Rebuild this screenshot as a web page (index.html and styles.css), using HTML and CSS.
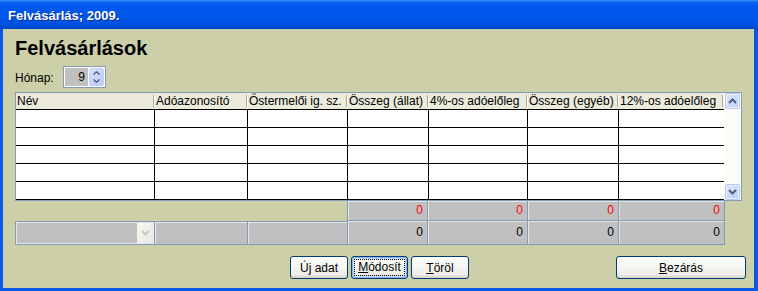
FILE: index.html
```html
<!DOCTYPE html>
<html lang="hu">
<head>
<meta charset="utf-8">
<title>Felvásárlás; 2009.</title>
<link rel="stylesheet" href="styles.css">
</head>
<body>
<div class="window">
  <div class="titlebar"><span class="title">Felvásárlás; 2009.</span></div>
  <div class="frame">
    <h1 class="heading">Felvásárlások</h1>
    <div class="month">
      <span class="month-label">Hónap:</span>
      <div class="spin">
        <div class="spin-field">9</div>
        <div class="spin-btns">
          <div class="spin-btn"><svg width="7" height="4" viewBox="0 0 7 4"><polyline points="0.5,3.5 3.5,0.8 6.5,3.5" fill="none" stroke="#4d6185" stroke-width="1.4"/></svg></div>
          <div class="spin-btn"><svg width="7" height="4" viewBox="0 0 7 4"><polyline points="0.5,0.5 3.5,3.2 6.5,0.5" fill="none" stroke="#4d6185" stroke-width="1.4"/></svg></div>
        </div>
      </div>
    </div>

    <div class="grid">
      <div class="data">
        <div class="hdr cols">
          <div class="hc">Név</div>
          <div class="hc">Adóazonosító</div>
          <div class="hc">Őstermelői ig. sz.</div>
          <div class="hc">Összeg (állat)</div>
          <div class="hc">4%-os adóelőleg</div>
          <div class="hc">Összeg (egyéb)</div>
          <div class="hc">12%-os adóelőleg</div>
        </div>
        <div class="row cols"><div class="dc"></div><div class="dc"></div><div class="dc"></div><div class="dc"></div><div class="dc"></div><div class="dc"></div><div class="dc"></div></div>
        <div class="row cols"><div class="dc"></div><div class="dc"></div><div class="dc"></div><div class="dc"></div><div class="dc"></div><div class="dc"></div><div class="dc"></div></div>
        <div class="row cols"><div class="dc"></div><div class="dc"></div><div class="dc"></div><div class="dc"></div><div class="dc"></div><div class="dc"></div><div class="dc"></div></div>
        <div class="row cols"><div class="dc"></div><div class="dc"></div><div class="dc"></div><div class="dc"></div><div class="dc"></div><div class="dc"></div><div class="dc"></div></div>
        <div class="row cols"><div class="dc"></div><div class="dc"></div><div class="dc"></div><div class="dc"></div><div class="dc"></div><div class="dc"></div><div class="dc"></div></div>
      </div>
      <div class="vscroll">
        <div class="sbtn"><svg width="9" height="6" viewBox="0 0 9 6"><polyline points="1,5 4.5,1.5 8,5" fill="none" stroke="#4d6185" stroke-width="2"/></svg></div>
        <div class="track"></div>
        <div class="sbtn"><svg width="9" height="6" viewBox="0 0 9 6"><polyline points="1,1 4.5,4.5 8,1" fill="none" stroke="#4d6185" stroke-width="2"/></svg></div>
      </div>
    </div>

    <div class="sums">
      <div class="sum-row r1">
        <div class="sc first">0</div>
        <div class="sc">0</div>
        <div class="sc">0</div>
        <div class="sc">0</div>
      </div>
      <div class="sum-row r2">
        <div class="combo">
          <div class="combo-btn"><svg width="9" height="6" viewBox="0 0 9 6"><polyline points="1,1 4.5,4.5 8,1" fill="none" stroke="#c6c5bc" stroke-width="2"/></svg></div>
        </div>
        <div class="sc bt"></div>
        <div class="sc bt"></div>
        <div class="sc">0</div>
        <div class="sc">0</div>
        <div class="sc">0</div>
        <div class="sc">0</div>
      </div>
    </div>

    <div class="buttons">
      <div class="btn-group">
        <button class="btn w58"><span class="lbl">Ú<u>j</u> adat</span></button>
        <button class="btn w57 focused"><span class="focus-ring"><u>M</u>ódosít</span></button>
        <button class="btn w58"><span class="lbl"><u>T</u>öröl</span></button>
      </div>
      <button class="btn close"><span class="lbl"><u>B</u>ezárás</span></button>
    </div>
  </div>
</div>
</body>
</html>
```

FILE: styles.css
```css
* { box-sizing: border-box; }
html, body { margin: 0; padding: 0; }
body {
  width: 758px;
  height: 291px;
  overflow: hidden;
  font-family: "Liberation Sans", Arial, sans-serif;
  font-size: 12px;
  color: #000;
  background: #cccfa8;
}
.window {
  width: 758px;
  height: 291px;
  display: flex;
  flex-direction: column;
}
.titlebar {
  height: 29px;
  flex: none;
  padding: 3px 0 0 8px;
  background: linear-gradient(to bottom, #3d8ff7 0px, #0c66ee 2px, #0058ee 5px, #0056ea 20px, #0050de 25px, #0044c6 29px);
}
.title {
  display: block;
  line-height: 26px;
  font-size: 13px;
  font-weight: bold;
  color: #fff;
  text-shadow: 1px 1px 0 #0a2a8a;
}
.frame {
  flex: 1;
  background: #cccfa8;
  border-style: solid;
  border-color: #0a57e4;
  border-width: 0 4px 3px 3px;
  padding: 0 8px 0 12px;
}
.heading {
  margin: 7px 0 0;
  font-size: 20px;
  line-height: 24px;
  font-weight: bold;
}
.month {
  display: flex;
  align-items: center;
  height: 22px;
  margin-top: 6px;
}
.month-label {
  width: 48px;
  padding-top: 2px;
}
.spin {
  display: flex;
  width: 43px;
  height: 22px;
  border: 1px solid #7f9db9;
  background: #fff;
  padding: 1px;
}
.spin-field {
  width: 23px;
  background: #c0c0c0;
  text-align: right;
  padding-right: 3px;
  line-height: 18px;
}
.spin-btns {
  width: 15px;
  margin-left: 1px;
  display: flex;
  flex-direction: column;
  background: linear-gradient(135deg, #d6e2fd, #b9cbf6);
  border: 1px solid #c0d0f4;
  border-radius: 2px;
}
.spin-btn {
  flex: 1;
  display: flex;
  align-items: center;
  justify-content: center;
}
.grid {
  display: flex;
  width: 727px;
  margin-top: 4px;
  border: 1px solid #7f9db9;
  background: #fff;
}
.data { width: 708px; }
.cols {
  display: grid;
  grid-template-columns: 139px 93px 100px 81px 99px 91px 105px;
}
.hdr {
  height: 17px;
  border-bottom: 1px solid #000;
  background: #ebeadb;
}
.hc {
  line-height: 16px;
  padding-left: 1px;
  white-space: nowrap;
  overflow: hidden;
  background-image: linear-gradient(#aca899, #aca899), linear-gradient(#fff, #fff);
  background-size: 1px 12px, 1px 12px;
  background-position: right 1px center, right 0 center;
  background-repeat: no-repeat;
}
.row {
  height: 18px;
  border-bottom: 1px solid #000;
}
.dc { border-right: 1px solid #000; }
.dc:last-child { border-right: 0; }
.vscroll {
  width: 17px;
  display: flex;
  flex-direction: column;
  background: #fbfbf8;
}
.sbtn {
  height: 16px;
  margin: 0 1px;
  display: flex;
  align-items: center;
  justify-content: center;
  border: 1px solid #b4c6ee;
  border-radius: 2px;
  background: linear-gradient(135deg, #dce6fe, #bccdf7);
  box-shadow: inset 0 0 0 1px #eef3fe;
}
.track { flex: 1; }
.sums {
  margin-top: -1px;
  width: 710px;
}
.sum-row {
  display: grid;
  grid-template-columns: 140px 93px 100px 80px 100px 91px 106px;
}
.r1 { height: 21px; }
.r2 { height: 24px; }
.sc {
  background: #c0c0c0;
  border-right: 1px solid #7f9db9;
  border-bottom: 1px solid #7f9db9;
  box-shadow: inset 1px 1px 0 #e6e6e6;
  text-align: right;
  padding-right: 4px;
  line-height: 23px;
}
.r1 .sc {
  border-top: 1px solid #7f9db9;
  line-height: 19px;
  color: #f00;
}
.r1 .first {
  grid-column: 4;
  margin-left: -1px;
  border-left: 1px solid #7f9db9;
}
.sc.bt { border-top: 1px solid #7f9db9; }
.combo {
  display: flex;
  justify-content: flex-end;
  border: 1px solid #7f9db9;
  background: #c0c0c0;
  box-shadow: inset 0 0 0 1px #e6e6e6;
  padding: 1px;
}
.combo-btn {
  width: 16px;
  display: flex;
  align-items: center;
  justify-content: center;
  background: linear-gradient(135deg, #f7f6f1, #e9e8e0);
}
.buttons {
  display: flex;
  height: 23px;
  margin-top: 11px;
}
.btn-group {
  display: flex;
  gap: 3px;
  margin-left: 275px;
}
.btn {
  height: 23px;
  padding: 0;
  border: 1px solid #003c74;
  border-radius: 3px;
  background: linear-gradient(#ffffff 0%, #f6f6f3 45%, #ecebe5 85%, #d6d0c5 100%);
  font-family: "Liberation Sans", Arial, sans-serif;
  font-size: 12px;
  color: #000;
  display: flex;
  align-items: center;
  justify-content: center;
}
.lbl { white-space: pre; }
.w58 { width: 58px; }
.w57 { width: 57px; }
.close { width: 130px; margin-left: auto; }
.focused {
  padding: 2px;
  box-shadow: inset 0 0 0 1px #8db2f1, inset 0 0 0 2px #c6dafc;
}
.focus-ring {
  display: block;
  width: 100%;
  height: 100%;
  line-height: 15px;
  text-align: center;
  border: 1px dotted #000;
}
```
